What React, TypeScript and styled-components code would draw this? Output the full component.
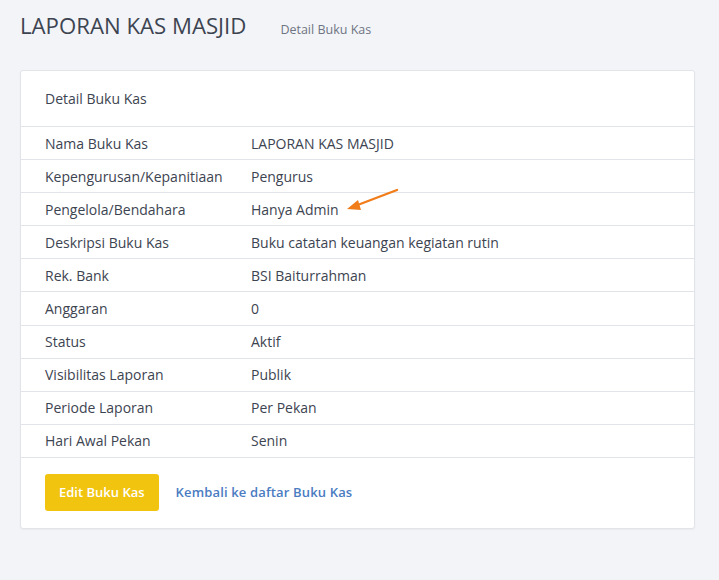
import React from 'react';
import styled, { createGlobalStyle } from 'styled-components';

const GlobalStyle = createGlobalStyle`
  html, body { margin: 0; padding: 0; background: #f3f4f8; }
  body { font-family: "Open Sans", "DejaVu Sans", sans-serif; color: #3d4451; }
`;

const ROWS: [string, string][] = [
  ['Nama Buku Kas', 'LAPORAN KAS MASJID'],
  ['Kepengurusan/Kepanitiaan', 'Pengurus'],
  ['Pengelola/Bendahara', 'Hanya Admin'],
  ['Deskripsi Buku Kas', 'Buku catatan keuangan kegiatan rutin'],
  ['Rek. Bank', 'BSI Baiturrahman'],
  ['Anggaran', '0'],
  ['Status', 'Aktif'],
  ['Visibilitas Laporan', 'Publik'],
  ['Periode Laporan', 'Per Pekan'],
  ['Hari Awal Pekan', 'Senin'],
];

const Page = styled.div`
  padding: 10px 24px 52px 20px;
`;
const Header = styled.div`
  display: flex;
  align-items: baseline;
  height: 40px;
  margin-bottom: 20px;
`;
const Title = styled.h1`
  margin: 0;
  font-size: 22.2px;
  font-weight: 400;
  color: #3d4451;
`;
const Subtitle = styled.span`
  margin-left: 34px;
  font-size: 12.5px;
  color: #6e7582;
`;
const Card = styled.div`
  background: #fff;
  border: 1px solid #e1e4e9;
  border-radius: 3px;
  box-shadow: 0 1px 2px rgba(0, 0, 0, 0.04);
`;
const CardHeader = styled.div`
  height: 55px;
  display: flex;
  align-items: center;
  padding: 0 24px;
  font-size: 14px;
  border-bottom: 1px solid #e1e4e9;
`;
const Row = styled.div`
  position: relative;
  display: grid;
  grid-template-columns: 206px 1fr;
  padding-left: 24px;
  height: 32.1px;
  align-items: center;
  font-size: 14px;
  border-bottom: 1px solid #e1e4e9;
`;
const Footer = styled.div`
  display: flex;
  align-items: center;
  gap: 17px;
  padding: 16px 24px 17px;
`;
const EditButton = styled.button`
  background: #f1c40f;
  color: #fff;
  border: none;
  border-radius: 3px;
  height: 37px;
  padding: 0 14px;
  font-family: inherit;
  font-size: 13px;
  font-weight: 600;
`;
const BackLink = styled.a`
  color: #4a7cc2;
  font-size: 13px;
  font-weight: 600;
  letter-spacing: 0.15px;
  text-decoration: none;
`;
const Arrow = styled.svg`
  position: absolute;
  left: 322px;
  top: -7px;
`;

export default function App() {
  return (
    <>
      <GlobalStyle />
      <Page>
        <Header>
          <Title>LAPORAN KAS MASJID</Title>
          <Subtitle>Detail Buku Kas</Subtitle>
        </Header>
        <Card>
          <CardHeader>Detail Buku Kas</CardHeader>
          {ROWS.map(([label, value], i) => (
            <Row key={label}>
              <span>{label}</span>
              <span>{value}</span>
              {i === 2 && (
                <Arrow width="60" height="30" viewBox="0 0 60 30">
                  <line x1="54" y1="4" x2="12" y2="20" stroke="#f07d1a" strokeWidth="2.4" strokeLinecap="round" />
                  <path d="M4 23 L15 14 L18 24 Z" fill="#f07d1a" />
                </Arrow>
              )}
            </Row>
          ))}
          <Footer>
            <EditButton>Edit Buku Kas</EditButton>
            <BackLink href="#">Kembali ke daftar Buku Kas</BackLink>
          </Footer>
        </Card>
      </Page>
    </>
  );
}
